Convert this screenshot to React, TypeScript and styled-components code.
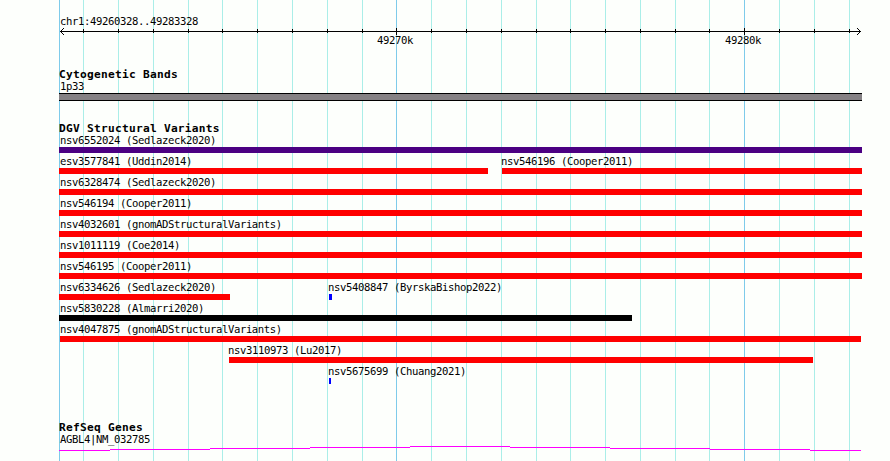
import React from 'react';
import styled, { createGlobalStyle } from 'styled-components';

const GlobalStyle = createGlobalStyle`
  * { box-sizing: border-box; }
  body { margin: 0; background: #fdfffc; overflow: hidden; }
`;

const Browser = styled.main`
  position: relative;
  isolation: isolate;
  width: 890px;
  height: 461px;
  padding-left: 59px;
  overflow: hidden;
  background: #fdfffc;
  color: #000;
  font-family: 'DejaVu Sans Mono', monospace;
`;

const GridLayer = styled.div`
  position: absolute;
  inset: 0;
  z-index: -1;
  display: flex;
`;

const GridLine = styled.i<{ $gap: number; $major: boolean }>`
  flex: 0 0 1px;
  margin-left: ${p => p.$gap}px;
  background: ${p => (p.$major ? '#7ecbea' : '#aaeee8')};
`;

const Label = styled.div<{ $indent?: number }>`
  height: 12px;
  margin-left: ${p => p.$indent ?? 1}px;
  font-size: 10.6px;
  line-height: 12px;
  letter-spacing: -0.382px;
  white-space: pre;
`;

const Heading = styled.h2`
  margin: 0;
  height: 12px;
  font-size: 11.2px;
  font-weight: 700;
  line-height: 14px;
  letter-spacing: 0.257px;
  white-space: pre;
`;

const Ruler = styled.header`
  height: 68px;
  padding-top: 15px;
`;

const Axis = styled.svg`
  display: block;
  width: 803px;
  height: 8px;
  shape-rendering: crispEdges;
`;

const Ticks = styled.div`
  display: flex;
  margin-top: -1px;
  padding-left: 317px;
  gap: 311px;
`;

const TickLabel = styled(Label)`
  width: 37px;
`;

const Track = styled.section<{ $height: number }>`
  height: ${p => p.$height}px;
`;

const Band = styled.div`
  width: 803px;
  height: 8px;
  margin-top: 1px;
  border: solid #000;
  border-width: 1px 0;
  background: #858184;
`;

const Row = styled.div`
  display: flex;
  height: 21px;
`;

const FeatureBox = styled.div<{ $width: number; $gap: number }>`
  flex: 0 0 ${p => p.$width}px;
  width: ${p => p.$width}px;
  margin-left: ${p => p.$gap}px;
`;

const Bar = styled.div<{ $color: string }>`
  height: 6px;
  margin-top: 1px;
  background: ${p => p.$color};
`;

const GeneLine = styled.svg`
  display: block;
  width: 803px;
  height: 8px;
  shape-rendering: crispEdges;
`;

const GRID = [59, 83, 118, 153, 188, 222, 257, 292, 327, 362, 396, 431, 466, 501, 536, 570, 605, 640, 675, 709, 744, 779, 814, 849];
const MAJOR = [396, 744];

const RED = '#ff0000';
const BLUE = '#0000ff';
const INDIGO = '#4b0082';
const BLACK = '#000';

type Feature = { name: string; start: number; end: number; color: string };

const feature = (name: string, start = 59, end = 862, color = RED): Feature => ({ name, start, end, color });

const ROWS: Feature[][] = [
  [feature('nsv6552024 (Sedlazeck2020)', 59, 862, INDIGO)],
  [feature('esv3577841 (Uddin2014)', 59, 488), feature('nsv546196 (Cooper2011)', 502)],
  [feature('nsv6328474 (Sedlazeck2020)')],
  [feature('nsv546194 (Cooper2011)')],
  [feature('nsv4032601 (gnomADStructuralVariants)')],
  [feature('nsv1011119 (Coe2014)')],
  [feature('nsv546195 (Cooper2011)')],
  [feature('nsv6334626 (Sedlazeck2020)', 59, 230), feature('nsv5408847 (ByrskaBishop2022)', 329, 332, BLUE)],
  [feature('nsv5830228 (Almarri2020)', 59, 632, BLACK)],
  [feature('nsv4047875 (gnomADStructuralVariants)', 60, 861)],
  [feature('nsv3110973 (Lu2017)', 229, 813)],
  [feature('nsv5675699 (Chuang2021)', 329, 331, BLUE)],
];

const labelIndent = (start: number) => (start > 60 ? -1 : 60 - start);

export default function App() {
  return (
    <>
      <GlobalStyle />
      <Browser>
        <GridLayer>
          {GRID.map((x, i) => (
            <GridLine key={x} $gap={i ? x - GRID[i - 1] - 1 : x} $major={x === 59 || MAJOR.includes(x)} />
          ))}
        </GridLayer>

        <Ruler>
          <Label>chr1:49260328..49283328</Label>
          <Axis viewBox="0 0 803 8">
            <rect x="1" y="4" width="801" height="1" />
            {GRID.slice(1).map(x => {
              const major = MAJOR.includes(x);
              return <rect key={x} x={x - 59} y={major ? 1 : 2} width="1" height={major ? 7 : 4} />;
            })}
            <path d="M2 3h1v1h-1zM3 2h1v1h-1zM4 1h1v1h-1zM2 5h1v1h-1zM3 6h1v1h-1zM4 7h1v1h-1z" />
            <path d="M800 3h1v1h-1zM799 2h1v1h-1zM798 1h1v1h-1zM800 5h1v1h-1zM799 6h1v1h-1zM798 7h1v1h-1z" />
          </Axis>
          <Ticks>
            <TickLabel>49270k</TickLabel>
            <TickLabel $indent={0}>49280k</TickLabel>
          </Ticks>
        </Ruler>

        <Track $height={54}>
          <Heading>Cytogenetic Bands</Heading>
          <Label>1p33</Label>
          <Band />
        </Track>

        <Track $height={299}>
          <Heading>DGV Structural Variants</Heading>
          {ROWS.map((row, r) => (
            <Row key={r}>
              {row.map((f, i) => (
                <FeatureBox key={f.name} $width={f.end - f.start} $gap={f.start - (i ? row[i - 1].end : 59)}>
                  <Label $indent={labelIndent(f.start)}>{f.name}</Label>
                  <Bar $color={f.color} />
                </FeatureBox>
              ))}
            </Row>
          ))}
        </Track>

        <Track $height={40}>
          <Heading>RefSeq Genes</Heading>
          <Label>AGBL4|NM_032785</Label>
          <GeneLine viewBox="0 0 803 8" fill="#ff00ff">
            <path d="M0 5h51v1H0zM51 4h100v1H51zM151 3h100v1H151zM251 2h100v1H251zM351 1h100v1H351zM451 2h100v1H451zM551 3h100v1H551zM651 4h100v1H651zM751 5h51v1H751z" />
          </GeneLine>
        </Track>
      </Browser>
    </>
  );
}
